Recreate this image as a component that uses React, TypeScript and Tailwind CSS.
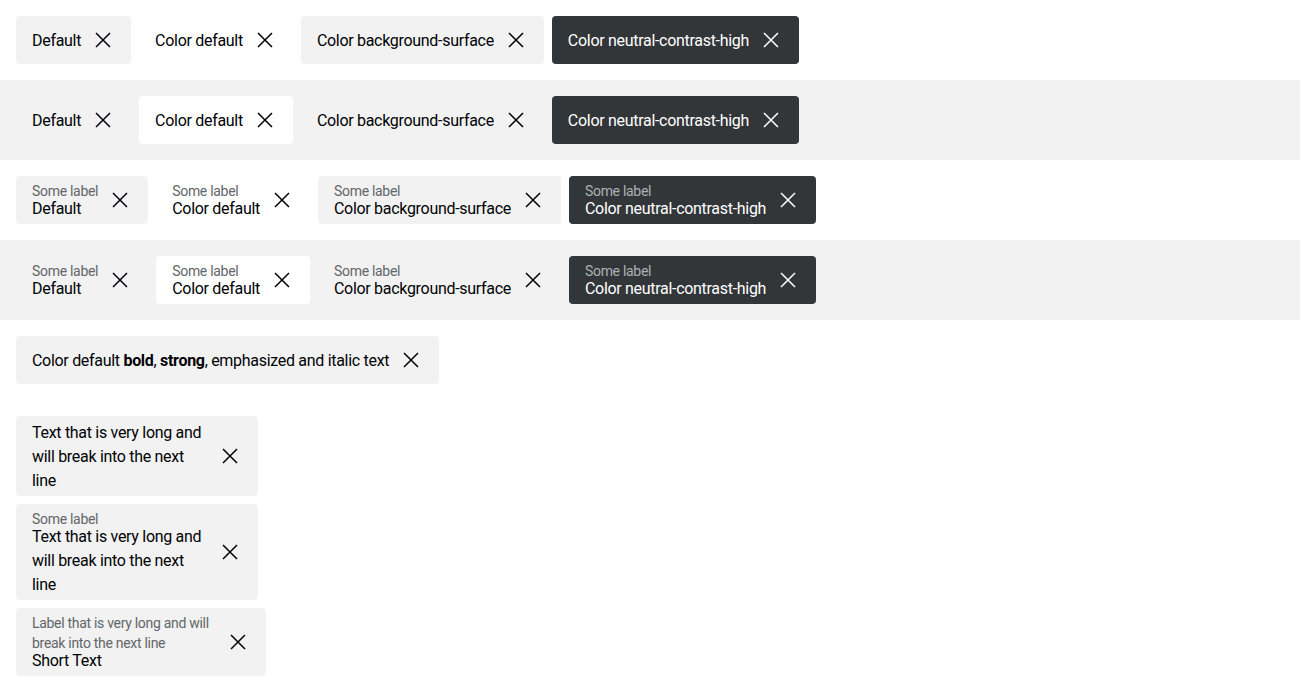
import React from "react";

type Variant = "default" | "color-default" | "surface" | "dark";

const bgMap: Record<Variant, string> = {
  default: "bg-[#f2f2f2] text-[#010205]",
  "color-default": "bg-white text-[#010205]",
  surface: "bg-[#f2f2f2] text-[#010205]",
  dark: "bg-[#323639] text-white",
};

function XIcon() {
  return (
    <svg width="24" height="24" viewBox="0 0 24 24" className="shrink-0" fill="none">
      <path d="M5 5 L19 19 M19 5 L5 19" stroke="currentColor" strokeWidth="1.5" />
    </svg>
  );
}

function Tag({
  variant = "default",
  label,
  children,
  textClass = "",
}: {
  variant?: Variant;
  label?: React.ReactNode;
  children: React.ReactNode;
  textClass?: string;
}) {
  const dark = variant === "dark";
  return (
    <div
      className={`inline-flex min-h-[48px] items-center gap-[10px] rounded-[4px] px-4 py-1 ${bgMap[variant]}`}
    >
      <div className={`relative top-px flex flex-col whitespace-nowrap ${textClass}`}>
        {label && (
          <span className={`text-[14px] leading-[20px] tracking-[-0.3px] ${dark ? "text-[#b0b1b2]" : "text-[#626669]"}`}>
            {label}
          </span>
        )}
        <span className={`text-[16px] leading-[24px] tracking-[-0.3px] ${label ? "-mt-1" : ""}`}>{children}</span>
      </div>
      <XIcon />
    </div>
  );
}

function Row({ gray, children }: { gray?: boolean; children: React.ReactNode }) {
  return (
    <div className={`flex h-[80px] items-start gap-2 p-4 ${gray ? "bg-[#f2f2f2]" : "bg-white"}`}>
      {children}
    </div>
  );
}

export default function App() {
  return (
    <div className="min-h-[700px] bg-white" style={{ fontFamily: "Roboto, 'Noto Sans', sans-serif" }}>
      <Row>
        <Tag variant="default">Default</Tag>
        <Tag variant="color-default">Color default</Tag>
        <Tag variant="surface">Color background-surface</Tag>
        <Tag variant="dark">Color neutral-contrast-high</Tag>
      </Row>
      <Row gray>
        <Tag variant="default">Default</Tag>
        <Tag variant="color-default">Color default</Tag>
        <Tag variant="surface">Color background-surface</Tag>
        <Tag variant="dark">Color neutral-contrast-high</Tag>
      </Row>
      <Row>
        <Tag variant="default" label="Some label">Default</Tag>
        <Tag variant="color-default" label="Some label">Color default</Tag>
        <Tag variant="surface" label="Some label">Color background-surface</Tag>
        <Tag variant="dark" label="Some label">Color neutral-contrast-high</Tag>
      </Row>
      <Row gray>
        <Tag variant="default" label="Some label">Default</Tag>
        <Tag variant="color-default" label="Some label">Color default</Tag>
        <Tag variant="surface" label="Some label">Color background-surface</Tag>
        <Tag variant="dark" label="Some label">Color neutral-contrast-high</Tag>
      </Row>
      <Row>
        <Tag variant="default">
          Color default <b className="font-bold">bold</b>, <strong className="font-bold">strong</strong>,{" "}
          <em className="not-italic">emphasized</em> and <i className="not-italic">italic</i> text
        </Tag>
      </Row>
      <div className="flex flex-col items-start gap-2 p-4">
        <Tag variant="default" textClass="w-[176px]">
          Text that is very long and
          <br />
          will break into the next
          <br />
          line
        </Tag>
        <Tag variant="default" label="Some label" textClass="w-[176px]">
          Text that is very long and
          <br />
          will break into the next
          <br />
          line
        </Tag>
        <Tag
          variant="default"
          label={
            <>
              Label that is very long and will
              <br />
              break into the next line
            </>
          }
          textClass="w-[184px]"
        >
          Short Text
        </Tag>
      </div>
    </div>
  );
}
